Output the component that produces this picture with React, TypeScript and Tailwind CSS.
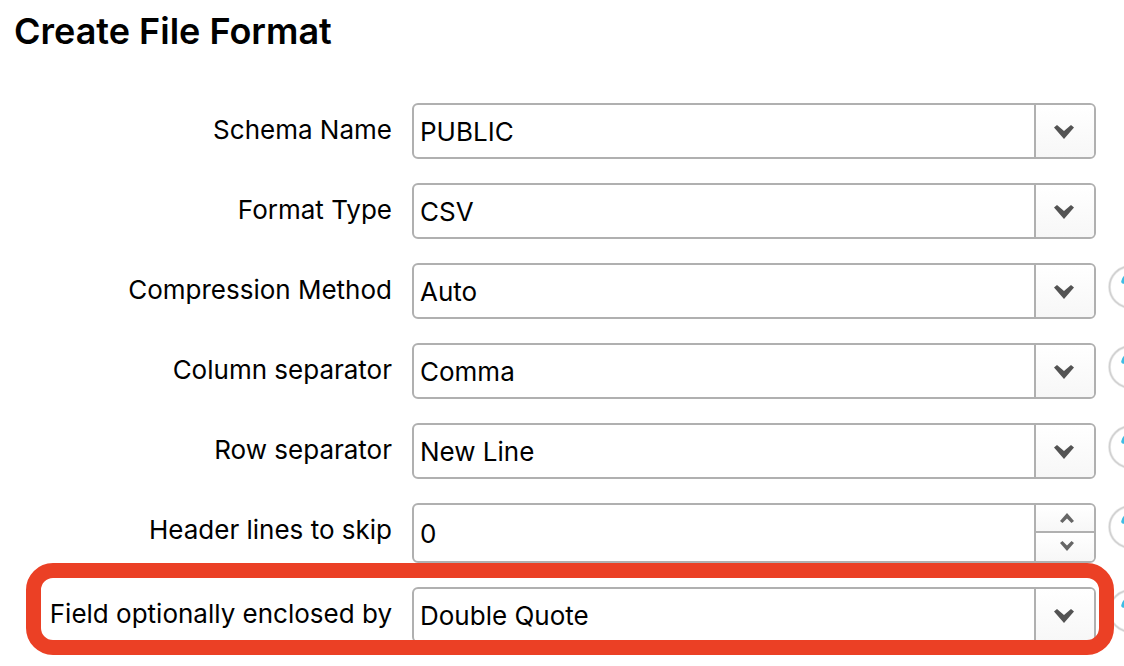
import React, { useState } from 'react';

type Field = {
  id: string;
  label: string;
  options: string[];
  help?: boolean;
};

const fields: Field[] = [
  { id: 'schema', label: 'Schema Name', options: ['PUBLIC'] },
  { id: 'type', label: 'Format Type', options: ['CSV'] },
  { id: 'compression', label: 'Compression Method', options: ['Auto'], help: true },
  { id: 'column', label: 'Column separator', options: ['Comma'], help: true },
  { id: 'row', label: 'Row separator', options: ['New Line'], help: true },
];

const enclosedBy: Field = {
  id: 'enclosed',
  label: 'Field optionally enclosed by',
  options: ['Double Quote'],
  help: true,
};

const HelpButton = () => (
  <button type="button" aria-label="Help" className="block size-11 rounded-full">
    <svg viewBox="0 0 44 44" className="size-11" fill="none">
      <circle cx="22" cy="22" r="20.5" fill="#fff" stroke="#ececec" strokeWidth="3" />
      <circle cx="22" cy="22" r="20.5" stroke="#d0d0d0" strokeWidth="1.5" />
      <path
        d="M15.500 16.500c1-4 3.500-6 7-6 4 0 7 2.500 7 6 0 5-7 5-7 10"
        stroke="#3dbde4"
        strokeWidth="4.500"
        strokeLinecap="round"
      />
      <circle cx="22.500" cy="33" r="2.500" fill="#3dbde4" />
    </svg>
  </button>
);

type RowProps = {
  id: string;
  label: string;
  help?: boolean;
  children: React.ReactNode;
};

const Row = ({ id, label, help, children }: RowProps) => (
  <div className="flex items-start">
    <label htmlFor={id} className="w-[392px] shrink-0 text-right leading-[54px]">
      {label}
    </label>
    <div className="ml-5 min-w-0 flex-1">{children}</div>
    <div className="ml-3 w-11 shrink-0 pt-0.5">{help && <HelpButton />}</div>
  </div>
);

const SelectRow = ({ id, label, options, help }: Field) => (
  <Row id={id} label={label} help={help}>
    <div className="relative">
      <select
        id={id}
        className="block h-14 w-full appearance-none rounded-md border-2 border-[#b0b0b0] bg-white pl-1.5 pr-16 outline-none"
      >
        {options.map((option) => (
          <option key={option}>{option}</option>
        ))}
      </select>
      <span className="pointer-events-none absolute inset-y-0.5 right-0.5 flex w-[60px] items-center justify-center rounded-r border-l-2 border-[#b0b0b0] bg-linear-to-b from-white to-[#f7f7f7] pt-0.5 pr-0.5">
        <svg viewBox="0 0 20 14" className="h-3.5 w-5">
          <path d="M0 2.500 3 0 10 6 17 0 20 2.500 10 14Z" fill="#535353" />
        </svg>
      </span>
    </div>
  </Row>
);

export default function App() {
  const [skip, setSkip] = useState(0);

  return (
    <main className="overflow-hidden bg-white pb-6 font-['Inter',sans-serif] text-[26px] text-black">
      <h1 className="px-3.5 pt-1.5 text-4xl leading-[50px] font-semibold">Create File Format</h1>

      {/* help buttons run past the right edge of the dialog */}
      <form className="-mr-7 mt-[47px] flex flex-col gap-6">
        {fields.map((field) => (
          <SelectRow key={field.id} {...field} />
        ))}

        <Row id="skip" label="Header lines to skip" help>
          <div className="flex h-[60px] overflow-hidden rounded-md border-2 border-[#b0b0b0]">
            <input
              id="skip"
              type="text"
              inputMode="numeric"
              value={skip}
              onChange={(e) => setSkip(Number(e.target.value) || 0)}
              className="min-w-0 flex-1 pl-1.5 outline-none"
            />
            <div className="flex w-[60px] flex-col border-l-2 border-[#b0b0b0]">
              <button
                type="button"
                aria-label="Increase"
                onClick={() => setSkip(skip + 1)}
                className="flex h-7 items-center justify-center border-b-2 border-[#b0b0b0] bg-linear-to-b from-white to-[#f7f7f7] pl-1"
              >
                <svg viewBox="0 0 14 10" className="h-2.5 w-3.5">
                  <path d="M0 8 7 0l7 8-2.500 2L7 5.500 2.500 10Z" fill="#666" />
                </svg>
              </button>
              <button
                type="button"
                aria-label="Decrease"
                onClick={() => setSkip(Math.max(skip - 1, 0))}
                className="flex h-7 items-center justify-center bg-linear-to-b from-white to-[#f7f7f7] pb-0.5 pl-1"
              >
                <svg viewBox="0 0 14 10" className="h-2.5 w-3.5">
                  <path d="M0 2 7 10l7-8-2.500-2L7 4.500 2.500 0Z" fill="#666" />
                </svg>
              </button>
            </div>
          </div>
        </Row>

        <div className="relative">
          <SelectRow {...enclosedBy} />
          <div className="pointer-events-none absolute -top-6 right-[38px] -bottom-3 left-[26px] rounded-[27px] border-[15px] border-[#eb4025]" />
        </div>
      </form>
    </main>
  );
}
